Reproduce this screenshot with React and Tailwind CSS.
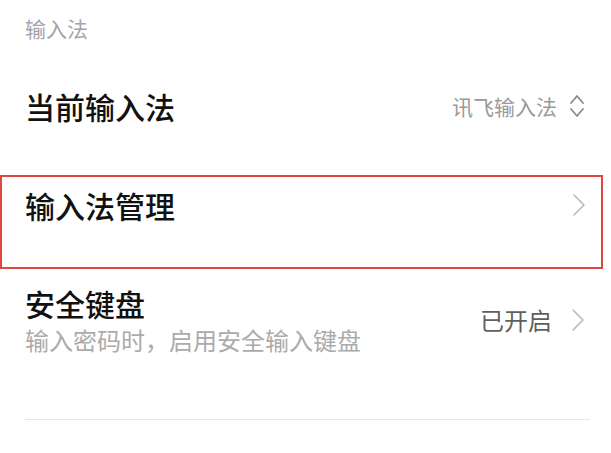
import React from 'react';

const FONT = { fontFamily: '"Noto Sans CJK SC", "Noto Sans", sans-serif' };

function ChevronRight() {
  return (
    <svg width="14" height="24" viewBox="0 0 14 24" fill="none" className="shrink-0">
      <polyline points="2,2 12,12 2,22" stroke="#b8b8b8" strokeWidth="1.6" strokeLinecap="round" strokeLinejoin="round" />
    </svg>
  );
}

function ChevronUpDown() {
  return (
    <svg width="16" height="26" viewBox="0 0 16 26" fill="none" className="shrink-0">
      <polyline points="2,10 8,3 14,10" stroke="#8a8a8a" strokeWidth="1.8" strokeLinecap="round" strokeLinejoin="round" />
      <polyline points="2,16 8,23 14,16" stroke="#8a8a8a" strokeWidth="1.8" strokeLinecap="round" strokeLinejoin="round" />
    </svg>
  );
}

export default function App() {
  return (
    <div className="relative h-[453px] w-[611px] overflow-hidden bg-white" style={FONT}>
      {/* section title */}
      <div className="pl-[25px] pt-[16px] text-[21px] leading-[24px] text-[#a3a3ab]">输入法</div>

      {/* current input method */}
      <div className="mt-[36px] flex h-[60px] items-center justify-between pl-[25px] pr-[26px]">
        <span className="text-[30px] font-medium leading-[36px] text-[#111]">当前输入法</span>
        <div className="flex items-center gap-[12px]">
          <span className="text-[21px] leading-[26px] text-[#9a9a9a]">讯飞输入法</span>
          <ChevronUpDown />
        </div>
      </div>

      {/* highlighted row */}
      <div className="mt-[39px] flex h-[94px] w-[603px] items-start justify-between border-2 border-[#e0463e] pl-[23px] pr-[15px] pt-[10px]">
        <span className="text-[30px] font-medium leading-[36px] text-[#111]">输入法管理</span>
        <div className="pt-[6px]">
          <ChevronRight />
        </div>
      </div>

      {/* secure keyboard */}
      <div className="mt-[16px] flex items-center justify-between pl-[25px] pr-[26px]">
        <div className="flex flex-col">
          <span className="text-[30px] font-medium leading-[36px] text-[#111]">安全键盘</span>
          <span className="mt-[4px] text-[24px] leading-[30px] text-[#ababab]">输入密码时，启用安全输入键盘</span>
        </div>
        <div className="flex items-center gap-[19px]">
          <span className="text-[24px] leading-[30px] text-[#5f5f5f]">已开启</span>
          <ChevronRight />
        </div>
      </div>

      <div className="ml-[25px] mt-[64px] h-px w-[565px] bg-[#e6e6e6]" />
    </div>
  );
}
